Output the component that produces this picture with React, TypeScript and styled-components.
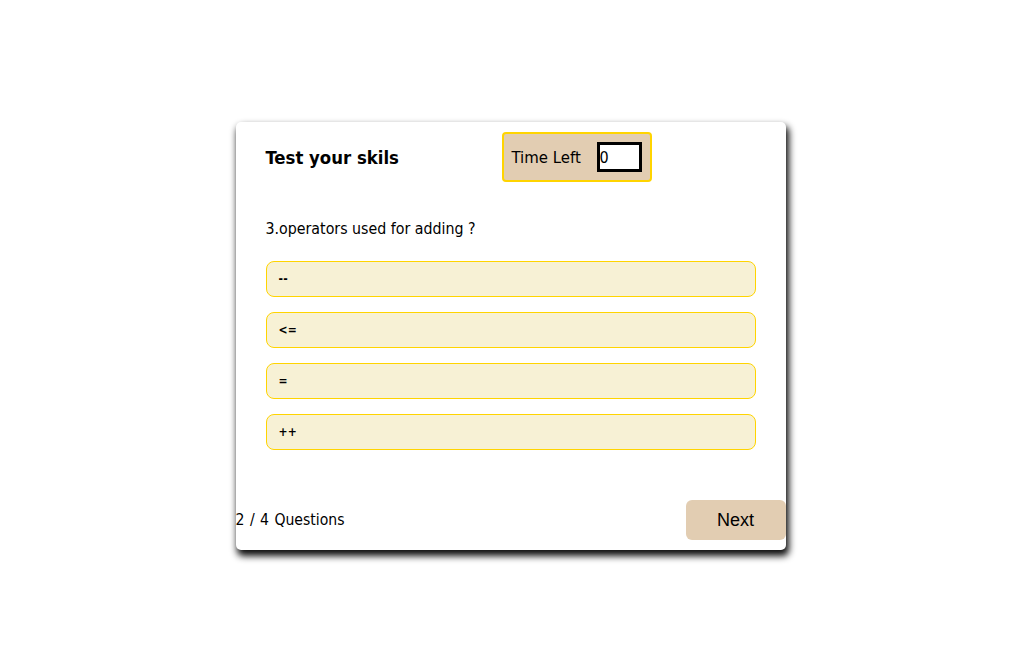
import React from "react";
import styled, { createGlobalStyle } from "styled-components";

const Global = createGlobalStyle`
  html, body { margin: 0; padding: 0; background: #fff; }
  body { font-family: "DejaVu Sans Condensed", "DejaVu Sans", sans-serif; font-stretch: condensed; }
`;

const Page = styled.div`
  width: 1021px;
  height: 672px;
  display: flex;
  justify-content: center;
  padding-top: 122px;
  box-sizing: border-box;
`;

const Card = styled.div`
  width: 550px;
  height: 428px;
  background: #fff;
  border-radius: 5px;
  box-shadow: 2px 5px 7px 1px rgba(0, 0, 0, 0.95);
  display: flex;
  flex-direction: column;
  box-sizing: border-box;
  padding: 10px 0 10px 0;
`;

const Header = styled.div`
  display: flex;
  align-items: center;
  padding: 0 30px;
  height: 50px;
`;

const Title = styled.h1`
  margin: 0;
  font-size: 18.4px;
  font-weight: bold;
  width: 236px;
  color: #000;
`;

const Timer = styled.div`
  width: 150px;
  height: 50px;
  box-sizing: border-box;
  background: #e2cdb2;
  border: 2px solid #ffd400;
  border-radius: 4px;
  display: flex;
  align-items: center;
  padding-left: 8px;
  font-size: 16.6px;
`;

const TimeLabel = styled.span``;

const TimeBox = styled.div`
  width: 45px;
  height: 30px;
  box-sizing: border-box;
  border: 3px solid #000;
  background: #fff;
  font-size: 16px;
  display: flex;
  align-items: center;
  margin-left: auto;
  margin-right: 8px;
`;

const Question = styled.div`
  padding: 0 30px;
  margin-top: 37px;
  font-size: 15.8px;
`;

const Options = styled.div`
  display: flex;
  flex-direction: column;
  gap: 15px;
  padding: 0 30px;
  margin-top: 23px;
`;

const Option = styled.div`
  height: 36px;
  box-sizing: border-box;
  background: #f7f1d5;
  border: 1px solid #ffd400;
  border-radius: 8px;
  display: flex;
  align-items: center;
  padding-left: 12px;
  font-size: 12px;
  font-weight: bold;
  letter-spacing: 0.3px;
`;

const Footer = styled.div`
  margin-top: auto;
  display: flex;
  justify-content: space-between;
  align-items: center;
`;

const Count = styled.span`
  font-size: 15.6px;
  word-spacing: 1px;
`;

const Next = styled.button`
  width: 100px;
  height: 40px;
  border: none;
  border-radius: 6px;
  background: #e2cdb2;
  font-family: "Liberation Sans", Arial, sans-serif;
  font-size: 18px;
  color: #000;
`;

export default function App() {
  const opts = ["--", "<=", "=", "++"];
  return (
    <>
      <Global />
      <Page>
        <Card>
          <Header>
            <Title>Test your skils</Title>
            <Timer>
              <TimeLabel>Time Left</TimeLabel>
              <TimeBox>0</TimeBox>
            </Timer>
          </Header>
          <Question>3.operators used for adding ?</Question>
          <Options>
            {opts.map((o) => (
              <Option key={o}>{o}</Option>
            ))}
          </Options>
          <Footer>
            <Count>2 / 4 Questions</Count>
            <Next>Next</Next>
          </Footer>
        </Card>
      </Page>
    </>
  );
}
